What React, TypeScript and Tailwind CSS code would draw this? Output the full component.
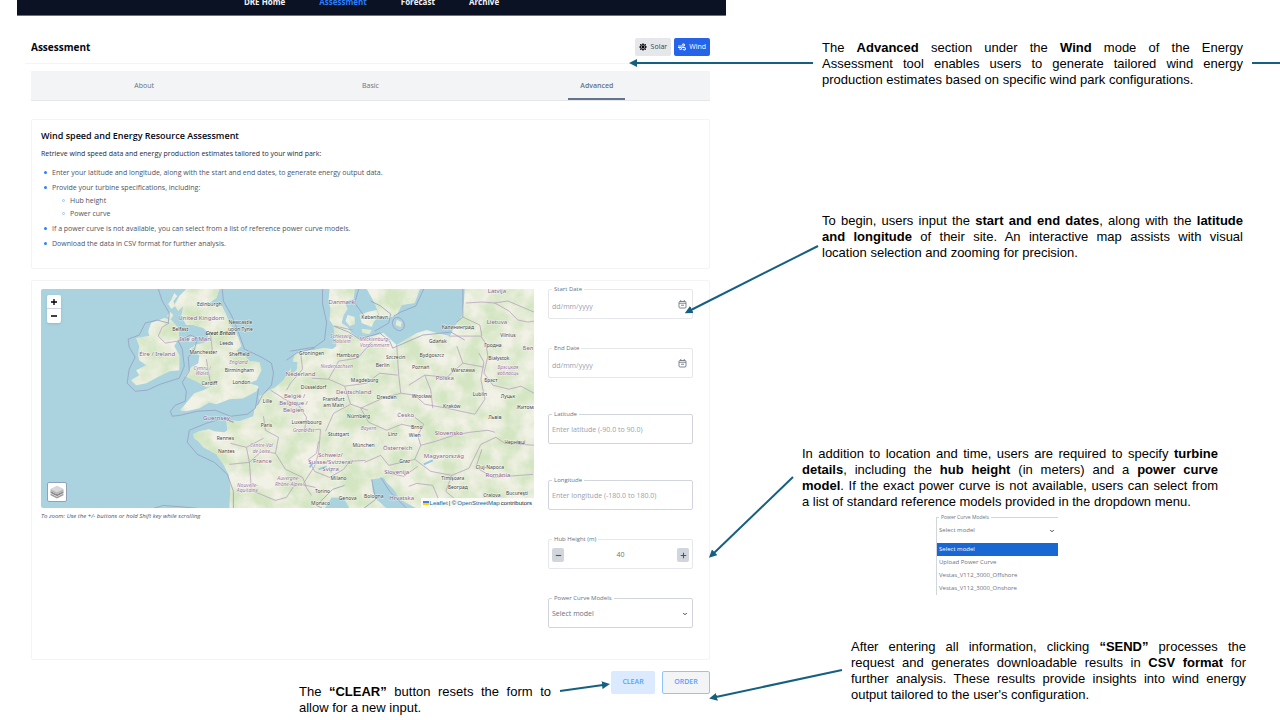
import {useId} from "react";
import type {ReactNode} from "react";
import {ChevronDown} from "lucide-react";
import {FaSun, FaWind} from "react-icons/fa";

const navItems = ["DRE Home", "Assessment", "Forecast", "Archive"];
const tabs = ["About", "Basic", "Advanced"];
const models = ["Select model", "Upload Power Curve", "Vestas_V112_3000_Offshore", "Vestas_V112_3000_Onshore"];

export default function App() {
    return (
        <div className="relative min-h-screen overflow-hidden bg-white">
            <main className="grid grid-cols-[709fr_554fr] pl-[17px]">
                <Portal />
                <Notes />
            </main>
            <Arrows />
        </div>
    );
}

function Portal() {
    return (
        <div className="font-['Open_Sans','Noto_Sans',sans-serif] text-[7px] text-gray-600">
            <header className="flex h-4 items-start justify-center overflow-hidden border-b border-slate-500 bg-[#0b1224]">
                <nav className="-mt-1.5 flex gap-8.5 text-[8px] leading-4 font-bold text-gray-100">
                    {navItems.map((item) => (
                        <a key={item} href="#" className={item === "Assessment" ? "text-blue-500" : ""}>
                            {item}
                        </a>
                    ))}
                </nav>
            </header>

            <div className="mx-2 mt-4 flex h-8 items-center justify-between border-b border-gray-100 pr-2 pl-1.5">
                <h1 className="text-[10px] font-bold text-gray-950">Assessment</h1>
                <div className="mb-0.5 flex gap-[3px]">
                    <button className="flex h-[18px] items-center gap-1 rounded-xs bg-gray-200 px-1 pt-px text-gray-700">
                        <FaSun className="size-2 text-black" />
                        Solar
                    </button>
                    <button className="flex h-[18px] items-center gap-[3px] rounded-xs bg-[#2563eb] px-1 pt-px text-white">
                        <FaWind className="size-2" />
                        Wind
                    </button>
                </div>
            </div>

            <div className="pr-4 pl-3.5">
                <div role="tablist" className="mt-[7px] grid h-[30px] grid-cols-3 justify-items-center border-b border-gray-200 bg-gray-100">
                    {tabs.map((tab) => (
                        <button
                            key={tab}
                            role="tab"
                            aria-selected={tab === "Advanced"}
                            className={
                                tab === "Advanced"
                                    ? "border-b-2 border-slate-500 px-3 pt-1 font-semibold text-gray-500"
                                    : "border-b-2 border-transparent px-3 pt-1 text-gray-500"
                            }
                        >
                            {tab}
                        </button>
                    ))}
                </div>

                <section className="mt-[18px] h-[150px] rounded-xs border border-gray-100 px-[9px] pt-2">
                    <h2 className="text-[9px] leading-4 font-semibold text-gray-950">
                        Wind speed and Energy Resource Assessment
                    </h2>
                    <p className="mt-0.5 leading-4 text-gray-800">
                        Retrieve wind speed data and energy production estimates tailored to your wind park:
                    </p>
                    <ul className="mt-1 ml-[3px] flex flex-col gap-0.5 leading-[13px]">
                        <Bullet>Enter your latitude and longitude, along with the start and end dates, to generate energy output data.</Bullet>
                        <Bullet
                            nested={
                                <ul className="ml-[18px]">
                                    <Bullet hollow>Hub height</Bullet>
                                    <Bullet hollow>Power curve</Bullet>
                                </ul>
                            }
                        >
                            Provide your turbine specifications, including:
                        </Bullet>
                        <Bullet>If a power curve is not available, you can select from a list of reference power curve models.</Bullet>
                        <Bullet>Download the data in CSV format for further analysis.</Bullet>
                    </ul>
                </section>

                <section className="mt-[11px] flex h-[380px] gap-3.5 rounded-xs border border-gray-100 pr-4 pl-[9px]">
                    <div className="min-w-0 flex-1 pt-2">
                        <div className="relative overflow-hidden rounded-xs">
                            <EuropeMap />
                            <div className="absolute top-1.5 left-1.5 flex w-3.5 flex-col rounded-xs bg-white text-black shadow">
                                <button aria-label="Zoom in" className="flex h-3.5 items-center justify-center border-b border-gray-300">
                                    <svg viewBox="0 0 9 9" className="size-1.5" stroke="currentColor" strokeWidth="2">
                                        <path d="M0 4.5h9M4.5 0v9" />
                                    </svg>
                                </button>
                                <button aria-label="Zoom out" className="flex h-3.5 items-center justify-center">
                                    <svg viewBox="0 0 9 9" className="size-1.5" stroke="currentColor" strokeWidth="2">
                                        <path d="M0 4.5h9" />
                                    </svg>
                                </button>
                            </div>
                            <button aria-label="Layers" className="absolute bottom-1.5 left-1.5 flex size-5 items-center justify-center rounded-xs border border-slate-400 bg-white">
                                <svg viewBox="0 0 26 26" className="size-3.5">
                                    <path d="M1 16l12 6 12-6v3l-12 6-12-6z" fill="#a0a0a0" />
                                    <path d="M1 11l12 6 12-6v4l-12 6-12-6z" fill="#8a8a8a" />
                                    <path d="M13 2l12 6v3l-12 6L1 11V8z" fill="#b5b5b5" />
                                    <path d="M13 2l12 6-12 6L1 8z" fill="#d9d9d9" />
                                </svg>
                            </button>
                            <div className="absolute right-0 bottom-0 flex items-center gap-px bg-white/80 px-0.5 font-['Liberation_Sans',Arial,sans-serif] text-[6px] leading-2.5 text-gray-800">
                                <svg viewBox="0 0 12 8" className="h-1 w-1.5">
                                    <path fill="#4c7be1" d="M0 0h12v4H0z" />
                                    <path fill="#ffd500" d="M0 4h12v4H0z" />
                                </svg>
                                <a href="#" className="text-sky-700">Leaflet</a>
                                <span>| ©</span>
                                <a href="#" className="text-sky-700">OpenStreetMap</a>
                                <span>contributors</span>
                            </div>
                        </div>
                        <p className="mt-1 text-[6px] leading-2 text-gray-600 italic">
                            To zoom: Use the +/- buttons or hold Shift key while scrolling
                        </p>
                    </div>

                    <form className="w-[145px] pt-2">
                        <Field label="Start Date" soft>
                            {(id) => <DateInput id={id} />}
                        </Field>
                        <Field label="End Date" soft className="mt-[29px]">
                            {(id) => <DateInput id={id} />}
                        </Field>
                        <Field label="Latitude" className="mt-9">
                            {(id) => <input id={id} placeholder="Enter latitude (-90.0 to 90.0)" className="w-full outline-none placeholder:text-gray-400" />}
                        </Field>
                        <Field label="Longitude" className="mt-9">
                            {(id) => <input id={id} placeholder="Enter longitude (-180.0 to 180.0)" className="w-full outline-none placeholder:text-gray-400" />}
                        </Field>
                        <Field label="Hub Height (m)" soft className="mt-[29px]">
                            {(id) => (
                                <>
                                    <StepButton label="Decrease height" path="M1 4.5h7" />
                                    <input id={id} defaultValue="40" className="min-w-0 flex-1 text-center text-gray-500 outline-none" />
                                    <StepButton label="Increase height" path="M1 4.5h7M4.5 1v7" />
                                </>
                            )}
                        </Field>
                        <Field label="Power Curve Models" className="mt-[29px]">
                            {(id) => <ModelSelect id={id} />}
                        </Field>
                    </form>
                </section>

                <div className="mt-[11px] flex items-start justify-end">
                    <Note className="mt-[13px] mr-[60px] w-[252px]">
                        <Line>The <b>“CLEAR”</b> button resets the form to</Line>
                        <Line last>allow for a new input.</Line>
                    </Note>
                    <div className="flex gap-[7px] font-semibold text-blue-400">
                        <button className="h-[23px] w-11 rounded-xs bg-blue-100">CLEAR</button>
                        <button className="h-[23px] w-12 rounded-xs border border-blue-300 bg-gray-100">ORDER</button>
                    </div>
                </div>
            </div>
        </div>
    );
}

function Bullet({hollow, nested, children}: {hollow?: boolean; nested?: ReactNode; children: ReactNode}) {
    return (
        <li>
            <div className="flex items-center gap-[5px]">
                <span className={hollow ? "size-[3px] rounded-full border border-blue-300" : "size-[3px] rounded-full bg-blue-500"} />
                {children}
            </div>
            {nested}
        </li>
    );
}

type FieldProps = {
    label: string;
    soft?: boolean;
    className?: string;
    children: (id: string) => ReactNode;
};

function Field({label, soft, className = "", children}: FieldProps) {
    const id = useId();

    return (
        <div className={`relative flex h-[30px] items-center rounded-xs border px-[3px] pt-0.5 text-[7px] text-gray-400 ${soft ? "border-gray-200" : "border-gray-300"} ${className}`}>
            <label htmlFor={id} className="absolute -top-[5px] left-[3px] bg-white px-0.5 text-[6px] leading-2 text-gray-500">
                {label}
            </label>
            {children(id)}
        </div>
    );
}

function DateInput({id}: {id: string}) {
    return (
        <>
            <input id={id} placeholder="dd/mm/yyyy" className="mt-1 min-w-0 flex-1 outline-none placeholder:text-gray-400" />
            <button type="button" aria-label="Open calendar" className="mr-0.5 mb-0.5">
                <svg viewBox="0 0 18 18" className="size-[9px]" fill="none" stroke="#6b7280" strokeWidth="1.7">
                    <rect x="2" y="3" width="14" height="13" rx="2" />
                    <path d="M2 6.5h14M5.5 0v4M12.5 0v4M6 10.5h6" />
                </svg>
            </button>
        </>
    );
}

function StepButton({label, path}: {label: string; path: string}) {
    return (
        <button type="button" aria-label={label} className="flex h-3.5 w-3 items-center justify-center rounded-xs bg-gray-300">
            <svg viewBox="0 0 9 9" className="size-[7px]" stroke="#4b5563" strokeWidth="1.4">
                <path d={path} />
            </svg>
        </button>
    );
}

function ModelSelect({id}: {id: string}) {
    return (
        <>
            <select id={id} className="min-w-0 flex-1 appearance-none text-gray-500 outline-none">
                {models.map((model) => (
                    <option key={model}>{model}</option>
                ))}
            </select>
            <ChevronDown className="pointer-events-none mr-px size-1.5 text-gray-700" strokeWidth={4} />
        </>
    );
}

function Notes() {
    return (
        <div className="pt-10 pl-[76px]">
            <Note className="ml-5 w-[421px]">
                <Line>The <b>Advanced</b> section under the <b>Wind</b> mode of the Energy</Line>
                <Line>Assessment tool enables users to generate tailored wind energy</Line>
                <Line last>production estimates based on specific wind park configurations.</Line>
            </Note>

            <Note className="mt-[125px] ml-5 w-[421px]">
                <Line>To begin, users input the <b>start and end dates</b>, along with the <b>latitude</b></Line>
                <Line><b>and longitude</b> of their site. An interactive map assists with visual</Line>
                <Line last>location selection and zooming for precision.</Line>
            </Note>

            <Note className="mt-[185px] w-[416px]">
                <Line>In addition to location and time, users are required to specify <b>turbine</b></Line>
                <Line><b>details</b>, including the <b>hub height</b> (in meters) and a <b>power curve</b></Line>
                <Line><b>model</b>. If the exact power curve is not available, users can select from</Line>
                <Line last>a list of standard reference models provided in the dropdown menu.</Line>
            </Note>

            <ModelMenu />

            <Note className="mt-11 ml-[49px] w-[395px]">
                <Line>After entering all information, clicking <b>“SEND”</b> processes the</Line>
                <Line>request and generates downloadable results in <b>CSV format</b> for</Line>
                <Line>further analysis. These results provide insights into wind energy</Line>
                <Line last>output tailored to the user's configuration.</Line>
            </Note>
        </div>
    );
}

function Note({className, children}: {className: string; children: ReactNode}) {
    return (
        <p className={`font-['Liberation_Sans',Arial,sans-serif] text-[13px] leading-4 text-black ${className}`}>
            {children}
        </p>
    );
}

function Line({last, children}: {last?: boolean; children: ReactNode}) {
    return (
        <span className={last ? "block whitespace-nowrap" : "block text-justify [text-align-last:justify]"}>
            {children}{" "}
        </span>
    );
}

function ModelMenu() {
    const id = useId();

    return (
        <div className="mt-[7px] ml-[134px] w-[122px] border-l border-gray-300 font-['Open_Sans','Noto_Sans',sans-serif] text-[6px] text-gray-500">
            <div className="relative flex h-[26px] items-center border-t border-gray-300 px-0.5">
                <label htmlFor={id} className="absolute -top-[5px] left-0.5 bg-white px-0.5 text-[5px] leading-2">
                    Power Curve Models
                </label>
                <ModelSelect id={id} />
            </div>
            <ul role="listbox" aria-label="Power Curve Models">
                {models.map((model, i) => (
                    <li
                        key={model}
                        role="option"
                        aria-selected={i === 0}
                        className={i === 0 ? "bg-[#1967d2] px-0.5 leading-[13px] text-white" : "px-0.5 leading-[13px]"}
                    >
                        {model}
                    </li>
                ))}
            </ul>
        </div>
    );
}

// callouts from each note to the control it explains
const arrows = [
    "M813 63H636",
    "M818 246L691 310",
    "M793 477L714 553",
    "M842 670L716 697",
    "M560 691L603 685",
];

function Arrows() {
    return (
        <svg viewBox="0 0 1280 720" className="pointer-events-none absolute top-0 left-0 w-full" fill="none" stroke="#156082" strokeWidth="2">
            <defs>
                <marker id="head" viewBox="0 0 8 8" refX="1" refY="4" markerWidth="8" markerHeight="8" markerUnits="userSpaceOnUse" orient="auto">
                    <path d="M0 0l8 4-8 4z" fill="#156082" stroke="none" />
                </marker>
            </defs>
            {arrows.map((d) => (
                <path key={d} d={d} markerEnd="url(#head)" />
            ))}
            <path d="M1252 63h28" />
        </svg>
    );
}

const land = [
    // Great Britain
    "M145 0L138 7 133 16 137 22 142 17 140 27 145 36 152 36 162 39 167 44 166 52 162 54 153 56 150 62 158 66 157 74 150 78 144 87 155 92 165 98 172 96 162 101 153 104 148 110 139 121 145 122 158 119 168 113 175 115 188 110 202 109 215 102 217 97 208 94 215 91 220 81 218 73 208 72 203 66 195 62 200 57 195 44 188 34 185 26 180 16 168 14 175 9 178 0z",
    // Hebrides
    "M133 4l3 3-4 5 2 5-4 3-3-5 3-4zM129 23l3 3-3 5-3-4zM149 48l4-1-2 5-3 1zM148 60l3-2 3 2-3 4z",
    // Ireland
    "M110 34L118 31 123 29 130 31 137 39 138 49 133 57 138 66 138 81 128 82 118 87 105 94 95 96 90 91 98 86 95 81 105 76 98 71 97 66 98 57 95 49 108 47 107 42z",
    // mainland
    "M288 0L287 11 289 20 288 31 292 37 293 47 295 57 291 60 282 59 272 61 258 62 253 66 249 80 242 91 234 98 228 101 218 107 218 113 213 120 212 127 198 132 188 131 185 132 186 141 183 143 173 142 168 140 158 142 152 145 153 149 157 152 162 158 175 165 182 175 187 185 189 197 188 219 283 219 290 208 302 208 308 219 492 219 492 0 423 0 422 14 420 27 412 39 408 47 395 44 385 41 375 44 355 56 345 47 342 44 325 49 317 49 310 44 306 38 300 34 302 26 306 20 303 13 312 10 313 0z",
    // Danish islands, Sweden, Bornholm
    "M318 26L326 23 335 21 337 27 332 33 330 38 320 34zM306 26l7 2 0 7-5 2-4-5zM320 40l10 1-2 4-7-1z",
    "M325 0L333 14 338 27 347 29 355 26 360 16 373 14 378 0zM355 31l5 2-1 5-5-2z",
].join("");

const seas = "M330 190L342 188 345 193 352 200 358 210 375 219 345 219 335 210 331 202zM250 72l6 1-1 8-6 4z";

const seaLimits = [
    "M117 0L121 12 128 24 127 34 116 31 104 34 98 46 87 50 88 58 94 68 88 80 86 94 94 102 106 101 119 95 138 89 143 77 141 60 137 52 149 46 156 49 153 61 147 68 148 82 141 93 145 102 144 112 134 116 129 122 131 127 139 126 156 122 174 121 189 127 206 125 214 119 217 100",
    "M181 0l1 12 8 14 7 17 6 17 17 8 10 6 2 10-2 12-9 10-5 10",
    "M249 62l24-4 10-7 2-18-4-18V0M292 37l15 6 11 7 20-6 10 8 3 7 30-13 28-3 14 8M322 26l-9-12 4-14M333 42l14-8 2-9-10-8-10-5M352 27l7-4 15-6 8-17M353 29c8-3 13 9 7 12s-13-7-7-12M421 0v28l-6 5",
    "M245 71l10-7 18-5M187 131l5 2-10-4-17 5-17 7-2 12 10 12 17 8 13 12 6 17v34M112 219l10-3 25 2 10 1M281 219l-6-3 16-16 12-4M322 219l12-9-4-20M339 188l9 14 17 17",
];

const borders = [
    "M117 47l4-9 7-4M117 47l7 7 13-2M169 42l2 20M165 70l4 24",
    "M259 62l2 18-12 14-4 7M229 101l16 10 12 5 8 12-2 13 16-1-2 24-4 13-11 17 8 12M293 37l18 4M355 56l2 30 2 18-18 5-22 10 8 14 18 8 15-6 13 3M359 104l14 2 10 9 22 4 28 6 10-15-4-20 3-17-5-9",
    "M407 47h32l5 8 2 12-4 17 9 12 16 4 12-3 13 7M421 28l17 8 2 11M424 14l16-1 13 1 14 8 9 9 10 2 6-1M452 14l14-2 26 11",
    "M373 128l9 7-6 11 3 10 15-4 18-6 16-3 18-2 7 2M379 156l-6 14 16 12 21 4 17-7 12-24 15-7 9 6 30 2M373 170l-26 6-8-10-16 7M277 152l-2 12-8 6 6 12 15 6 14-8 6-8 16-1M410 186l-6 16 18 15M344 183l18 4 14-10M367 197l8-3 16 2 5 12-3 11M440 160l-6 18 17 10 40-3",
    "M188 175l20-2 12-11 14 2 3-16-13-7-2-14M208 173l2 28 24 10 11-3 9-14 20 4M189 154l16 4 17-9M205 158l3 15M234 164l10 16 17 8 4 9M284 142l8-18 17-9-6-18-16-7-17-1M309 115l17 6M287 90l10-18 19-3 14-16M303 97l22-3 13-10 18 2M367 96l16-10 22 2 16-14-6-17M391 119l-2-18-6-15M421 74l21 4",
];

type Label = [text: string, x: number, y: number];

const countries: Label[] = [
    ["United Kingdom", 160, 31], ["Isle of Man", 154, 52], ["Éire / Ireland", 116, 67], ["Danmark", 300, 15],
    ["Latvija", 455, 4], ["Lietuva", 455, 35], ["Nederland", 259, 87], ["Polska", 403, 91], ["Deutschland", 312, 105],
    ["België /", 253, 109], ["Belgique /", 252, 116], ["Belgien", 252, 123], ["Česko", 364, 128], ["Guernsey", 175, 131],
    ["France", 221, 174], ["Slovensko", 407, 146], ["Österreich", 356, 161], ["Magyarország", 402, 169], ["Schweiz/", 289, 168],
    ["Suisse/Svizzera/", 289, 175], ["Svizra", 289, 182], ["Slovenija", 355, 185], ["România", 456, 188], ["Hrvatska", 360, 211],
    ["Бел", 486, 61],
];

const regions: Label[] = [
    ["England", 197, 75], ["Cymru /", 161, 81], ["Wales", 161, 86], ["Schleswig-", 300, 49], ["Holstein", 300, 54],
    ["Mecklenburg-", 333, 52], ["Vorpommern", 333, 58], ["Niedersachsen", 295, 79], ["Брэсцкая", 466, 80], ["вобласць", 466, 86],
    ["Grand Est", 262, 143], ["Bayern", 327, 141], ["Centre-Val", 220, 158], ["de Loire", 220, 164], ["Nouvelle-", 206, 198],
    ["Aquitaine", 206, 203], ["Auvergne-", 247, 191], ["Rhône-Alpes", 247, 197],
];

const cities: Label[] = [
    ["Edinburgh", 168, 17], ["Newcastle", 199, 35], ["upon Tyne", 199, 42], ["Belfast", 139, 42], ["Leeds", 185, 56],
    ["Manchester", 162, 65], ["Sheffield", 198, 67], ["Birmingham", 198, 83], ["Cardiff", 168, 96], ["London", 200, 95],
    ["København", 333, 30], ["Калининград", 416, 40], ["Vilnius", 466, 48], ["Гродна", 451, 58], ["Gdańsk", 396, 54],
    ["Groningen", 270, 66], ["Hamburg", 306, 68], ["Szczecin", 354, 70], ["Bydgoszcz", 390, 68], ["Białystok", 457, 71],
    ["Berlin", 341, 78], ["Poznań", 379, 80], ["Warszawa", 421, 83], ["Magdeburg", 323, 93], ["Брэст", 449, 93],
    ["Düsseldorf", 272, 100], ["Lille", 226, 114], ["Frankfurt", 292, 112], ["am Main", 292, 118], ["Dresden", 345, 110],
    ["Wrocław", 380, 109], ["Lublin", 438, 107], ["Луцьк", 466, 109], ["Kraków", 410, 119], ["Львів", 453, 130],
    ["Житомир", 486, 120], ["Nürnberg", 317, 129], ["Luxembourg", 265, 135], ["Paris", 225, 138], ["Brno", 375, 140],
    ["Wien", 373, 148], ["Stuttgart", 297, 147], ["Linz", 351, 147], ["München", 322, 158], ["Rennes", 184, 151],
    ["Nantes", 185, 164], ["Graz", 363, 174], ["Чернівці", 473, 155], ["Cluj-Napoca", 448, 180], ["Timișoara", 411, 191],
    ["Београд", 416, 200], ["Craiova", 450, 208], ["București", 475, 206], ["Milano", 297, 191], ["Torino", 281, 204],
    ["Genova", 306, 211], ["Bologna", 332, 209], ["Monaco", 279, 216],
];

function EuropeMap() {
    return (
        <svg viewBox="0 0 492 219" role="img" aria-label="Map of Europe" className="block w-full bg-[#aad3df]">
            <defs>
                <clipPath id="land"><path d={land} /></clipPath>
                <filter id="terrain" x="0" y="0" width="100%" height="100%" colorInterpolationFilters="sRGB">
                    <feTurbulence type="fractalNoise" baseFrequency="0.05" numOctaves="6" seed="8" />
                    <feColorMatrix values="0 0 0 0 0.8  0 0 0 0 0.89  0 0 0 0 0.73  2.4 0 0 0 -0.7" />
                </filter>
            </defs>
            <path d={land} fill="#f2f1e6" />
            <rect width="492" height="219" filter="url(#terrain)" clipPath="url(#land)" opacity="0.8" />
            <path d={seas} fill="#aad3df" />
            <path d="M382 175l9-4M277 180l8-3M289 183l2-4M268 178l3-4" stroke="#8fc9e8" strokeWidth="2" />
            <g fill="none" strokeLinejoin="round">
                <path d={seaLimits.join("")} stroke="#969fc2" strokeWidth="0.8" />
                <path d={borders.join("")} stroke="#b7a4bd" strokeWidth="0.8" />
            </g>
            <g textAnchor="middle" fontFamily="Noto Sans, sans-serif" stroke="#fff" strokeOpacity="0.6" strokeWidth="1" paintOrder="stroke">
                <g fill="#8d618b" fontSize="6">
                    {countries.map(([text, x, y]) => <text key={text} x={x} y={y}>{text}</text>)}
                </g>
                <g fill="#a277a5" fontSize="5" fontStyle="italic">
                    {regions.map(([text, x, y]) => <text key={text} x={x} y={y}>{text}</text>)}
                </g>
                <g fill="#444" fontSize="5">
                    {cities.map(([text, x, y]) => <text key={text} x={x} y={y}>{text}</text>)}
                    <text x="179" y="46" fontStyle="italic" fontWeight="600">Great Britain</text>
                </g>
            </g>
        </svg>
    );
}
